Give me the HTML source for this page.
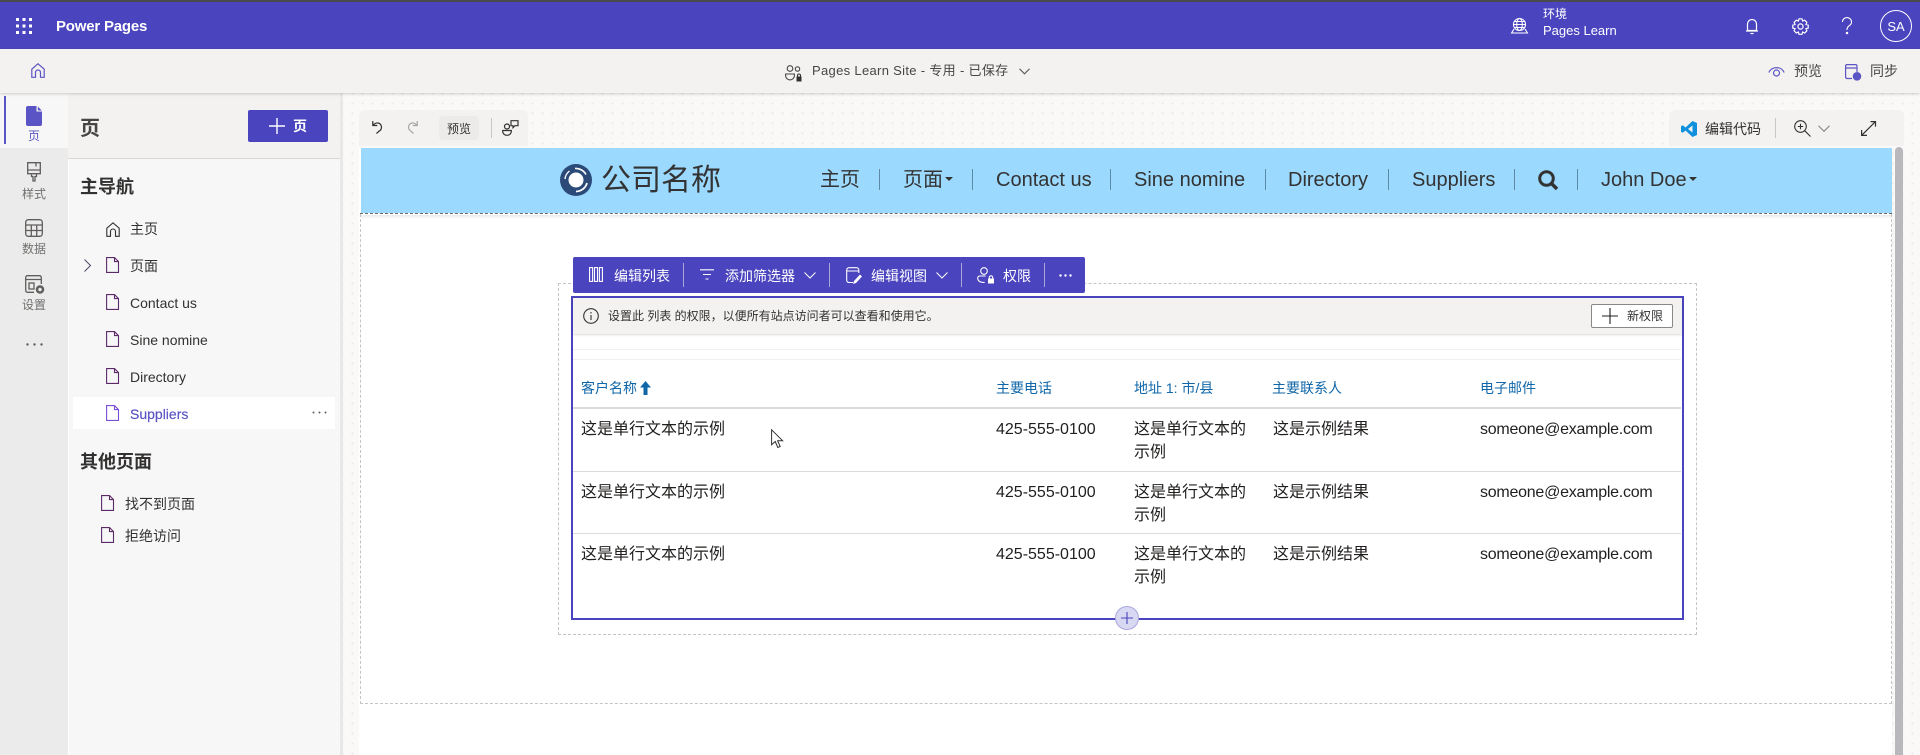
<!DOCTYPE html>
<html lang="zh-CN"><head><meta charset="utf-8"><title>Power Pages</title>
<style>
html,body{margin:0;padding:0;width:1920px;height:755px;overflow:hidden;background:#fff}
body{position:relative;font-family:"Liberation Sans","Noto Sans CJK SC",sans-serif;color:#323130;font-size:14px}
.a{position:absolute}
.t{position:absolute;white-space:nowrap;line-height:20px;height:20px}
svg{position:absolute;overflow:visible;fill:none}
.nav{font-size:20px;color:#333;line-height:28px;height:28px;top:165.500px}
.sep{position:absolute;width:1px;top:169px;height:21px;background:#5f8aa6}
.tb{position:absolute;width:1px;top:263px;height:24px;background:#a9a6d8}
.w{color:#fff;font-size:14px;top:265.500px}
.h{font-size:14px;color:#0f66a8;top:378px}
.c{font-size:16px;color:#201f1e;line-height:23px;height:23px}
.m{letter-spacing:-.25px}
.r{position:absolute;left:573px;width:1108px;height:1px}
.rl{color:#71706e;font-size:12px;left:14px;width:40px;text-align:center}
.it{font-size:14px;color:#323130}
</style></head><body>

<!-- top bar -->
<div class="a" style="left:0;top:0;width:1920px;height:2px;background:#4b4b4f"></div>
<div class="a" style="left:0;top:2px;width:1920px;height:47px;background:#4a44bf"></div>
<svg style="left:16px;top:18px" width="16" height="16"><g fill="#fff"><rect width="3" height="3"/><rect x="6.500" width="3" height="3"/><rect x="13" width="3" height="3"/><rect y="6.500" width="3" height="3"/><rect x="6.500" y="6.500" width="3" height="3"/><rect x="13" y="6.500" width="3" height="3"/><rect y="13" width="3" height="3"/><rect x="6.500" y="13" width="3" height="3"/><rect x="13" y="13" width="3" height="3"/></g></svg>
<div class="t" style="left:56px;top:17px;color:#fff;font-size:15px;font-weight:700;letter-spacing:-.2px">Power Pages</div>
<svg style="left:1511px;top:18px" width="17" height="16" stroke="#fff" stroke-width="1.100"><circle cx="8.500" cy="6.500" r="6"/><ellipse cx="8.500" cy="6.500" rx="2.800" ry="6"/><path d="M2.500 6.500h12M3.400 3.500h10.200M3.400 9.500h10.200M3 11l-2.400 4h15.800L14 11"/></svg>
<div class="t" style="left:1543px;top:4px;color:#fff;font-size:12px">环境</div>
<div class="t" style="left:1543px;top:21px;color:#fff;font-size:13px">Pages Learn</div>
<svg style="left:1745px;top:18px" width="14" height="17" stroke="#fff" stroke-width="1.200"><path d="M2.500 12.500V6a4.500 4.500 0 0 1 9 0v6.500zM1 13h12M5.500 15.500h3"/></svg>
<svg style="left:1792px;top:18px" width="17" height="17" stroke="#fff" stroke-width="1.200"><circle cx="8.500" cy="8.500" r="2.600"/><path d="M7 .8h3l.6 2.300 2.100-.9 2.200 2.200-1 2.100 2.300.6v3l-2.300.6 1 2.100-2.200 2.200-2.100-1-.6 2.300H7l-.6-2.300-2.100 1-2.200-2.200 1-2.100-2.300-.6v-3l2.300-.6-1-2.100 2.200-2.200 2.100.9z"/></svg>
<svg style="left:1841px;top:17px" width="12" height="18" stroke="#fff" stroke-width="1.100"><path d="M1.500 5a4.500 4.300 0 1 1 7 3.500C7 9.800 6 10.500 6 13"/><circle cx="6" cy="16" r=".7" fill="#fff"/></svg>
<div class="a" style="left:1880px;top:10px;width:30px;height:30px;border:1px solid #fff;border-radius:50%;color:#fff;font-size:13px;line-height:32px;text-align:center">SA</div>

<!-- sub bar -->
<div class="a" style="left:0;top:49px;width:1920px;height:44px;background:#f3f2f1;box-shadow:0 1px 3px rgba(0,0,0,.18);z-index:3"></div>
<div style="position:absolute;left:0;top:0;width:1920px;height:93px;z-index:4">
<svg style="left:31px;top:63px" width="14" height="15" stroke="#5b54c4" stroke-width="1.200"><path d="M.8 14.300V6.200L7 .8l6.200 5.400v8.100H9.500V9.500a2.500 2.500 0 0 0-5 0v4.800z"/></svg>
<svg style="left:785px;top:65px" width="18" height="17" stroke="#484644" stroke-width="1.100"><circle cx="5" cy="3.500" r="2.800"/><circle cx="12.500" cy="4" r="2.200"/><path d="M.6 9h8.800v1.500a4.400 4.400 0 0 1-8.800 0z"/><rect x="11.500" y="11.500" width="5" height="5" fill="#323130" stroke="none"/><path d="M12.500 11.500v-1a1.500 1.500 0 0 1 3 0v1" stroke="#323130"/></svg>
<div class="t" style="left:812px;top:61px;font-size:13px;color:#484644;letter-spacing:.32px">Pages Learn Site - 专用 - 已保存</div>
<svg style="left:1019px;top:68px" width="11" height="7" stroke="#605e5c" stroke-width="1.100"><path d="M.5.800l5 5 5-5"/></svg>
<svg style="left:1768px;top:66px" width="17" height="11" stroke="#5b54c4" stroke-width="1.200"><path d="M.8 6.500a8.500 8.500 0 0 1 15.400 0"/><circle cx="8.500" cy="7" r="3"/></svg>
<div class="t" style="left:1794px;top:61px;font-size:14px;color:#484644">预览</div>
<svg style="left:1845px;top:64px" width="16" height="16" stroke="#5b54c4" stroke-width="1.200"><path d="M7 14.500H2A1.500 1.500 0 0 1 .6 13V2A1.500 1.500 0 0 1 2 .6h8.500A1.500 1.500 0 0 1 12 2v6M.6 4h11.400"/><circle cx="12" cy="12.300" r="3.700" fill="#5b54c4"/></svg>
<div class="t" style="left:1870px;top:61px;font-size:14px;color:#484644">同步</div>
</div>

<!-- left rail -->
<div class="a" style="left:0;top:93px;width:68px;height:662px;background:#ebebeb"></div>
<div class="a" style="left:0;top:93px;width:68px;height:55px;background:#f7f7f7"></div>
<div class="a" style="left:4px;top:96px;width:2px;height:48px;background:#5b54c4"></div>
<svg style="left:26px;top:106px" width="16" height="20"><path fill="#5b54c4" d="M2 0h8.500v5.500H16V18a2 2 0 0 1-2 2H2a2 2 0 0 1-2-2V2a2 2 0 0 1 2-2z"/><path fill="#5b54c4" d="M11.800.5l4 4h-4z"/></svg>
<div class="t rl" style="top:126px;color:#5b54c4">页</div>
<svg style="left:27px;top:162px" width="14" height="20" stroke="#605e5c" stroke-width="1.300"><path d="M.7.700h12.600v11H.7zM.7 8h12.600M9 .7v3.800M4.500 11.700v2.800h1.500v4.500h2v-4.500h1.500v-2.800"/></svg>
<div class="t rl" style="top:184px">样式</div>
<svg style="left:25px;top:219px" width="18" height="18" stroke="#605e5c" stroke-width="1.300"><rect x=".7" y=".7" width="16.600" height="16.600" rx="2.500"/><path d="M.7 6h16.600M.7 11.500h16.600M6.300 6v11.300M11.700 6v11.300"/></svg>
<div class="t rl" style="top:239px">数据</div>
<svg style="left:25px;top:275px" width="20" height="20" stroke="#605e5c" stroke-width="1.300"><path d="M9 17.300H2.500a1.800 1.800 0 0 1-1.800-1.800V2.500A1.800 1.800 0 0 1 2.500.7h12a1.800 1.800 0 0 1 1.800 1.800V9M.7 4.500h15.600"/><rect x="4" y="8" width="5" height="6"/><circle cx="15" cy="14.500" r="3" stroke-width="2.500"/></svg>
<div class="t rl" style="top:295px">设置</div>
<svg style="left:26px;top:343px" width="17" height="3"><g fill="#605e5c"><circle cx="1.500" cy="1.500" r="1.200"/><circle cx="8.500" cy="1.500" r="1.200"/><circle cx="15.500" cy="1.500" r="1.200"/></g></svg>

<!-- panel -->
<div class="a" style="left:69px;top:93px;width:271px;height:662px;background:#f7f7f7"></div>
<div class="a" style="left:68px;top:93px;width:272px;height:65px;background:#f3f2f1;border-bottom:1px solid #d8d7d6"></div>
<div class="a" style="left:340px;top:93px;width:3px;height:662px;background:#e8e8e8"></div>
<div class="t" style="left:80px;top:119px;font-size:20px;font-weight:700;color:#484644">页</div>
<div class="a" style="left:248px;top:110px;width:80px;height:32px;background:#4a44bf;border-radius:2px"></div>
<svg style="left:269px;top:118px" width="16" height="16" stroke="#fff" stroke-width="1.400"><path d="M8 0v16M0 8h16"/></svg>
<div class="t" style="left:293px;top:116px;font-size:14px;font-weight:700;color:#fff">页</div>
<div class="t" style="left:80px;top:176.500px;font-size:18px;font-weight:700;color:#323130">主导航</div>

<svg style="left:106px;top:222px" width="14" height="15" stroke="#323130" stroke-width="1.100"><path d="M.8 14.300V6.200L7 .8l6.200 5.400v8.100H9.500V9.500a2.500 2.500 0 0 0-5 0v4.800z"/></svg>
<div class="t it" style="left:130px;top:219px">主页</div>
<svg style="left:84px;top:259px" width="7" height="13" stroke="#4a4a6a" stroke-width="1"><path d="M.5.500l6 6-6 6"/></svg>
<svg style="left:106px;top:257px" width="13" height="16" stroke="#5c2a68" stroke-width="1.100"><path d="M.6.600h7.900l4 4v10.800H.6zM8.500.600v4h4"/></svg>
<div class="t it" style="left:130px;top:256px">页面</div>
<svg style="left:106px;top:294px" width="13" height="16" stroke="#5c2a68" stroke-width="1.100"><path d="M.6.600h7.900l4 4v10.800H.6zM8.500.600v4h4"/></svg>
<div class="t it" style="left:130px;top:293px">Contact us</div>
<svg style="left:106px;top:331px" width="13" height="16" stroke="#5c2a68" stroke-width="1.100"><path d="M.6.600h7.900l4 4v10.800H.6zM8.500.600v4h4"/></svg>
<div class="t it" style="left:130px;top:330px">Sine nomine</div>
<svg style="left:106px;top:368px" width="13" height="16" stroke="#5c2a68" stroke-width="1.100"><path d="M.6.600h7.900l4 4v10.800H.6zM8.500.600v4h4"/></svg>
<div class="t it" style="left:130px;top:367px">Directory</div>
<div class="a" style="left:73px;top:397px;width:262px;height:32px;background:#fff"></div>
<svg style="left:106px;top:405px" width="13" height="16" stroke="#7a4fd6" stroke-width="1.100"><path d="M.6.600h7.900l4 4v10.800H.6zM8.500.600v4h4"/></svg>
<div class="t it" style="left:130px;top:404px;color:#5b54c4;-webkit-text-stroke:.2px #5b54c4">Suppliers</div>
<svg style="left:312px;top:411px" width="15" height="3"><g fill="#605e5c"><circle cx="1.500" cy="1.500" r="1"/><circle cx="7.500" cy="1.500" r="1"/><circle cx="13.500" cy="1.500" r="1"/></g></svg>
<div class="t" style="left:80px;top:452px;font-size:18px;font-weight:700;color:#323130">其他页面</div>
<svg style="left:101px;top:495px" width="13" height="16" stroke="#5c2a68" stroke-width="1.100"><path d="M.6.600h7.900l4 4v10.800H.6zM8.500.600v4h4"/></svg>
<div class="t it" style="left:125px;top:494px">找不到页面</div>
<svg style="left:101px;top:527px" width="13" height="16" stroke="#5c2a68" stroke-width="1.100"><path d="M.6.600h7.900l4 4v10.800H.6zM8.500.600v4h4"/></svg>
<div class="t it" style="left:125px;top:526px">拒绝访问</div>

<!-- canvas -->
<div class="a" style="left:343px;top:93px;width:1577px;height:662px;background-color:#faf9f8;background-image:radial-gradient(circle at 1.500px 1.500px,#eceae8 1px,transparent 1.300px);background-size:10px 10px;background-position:8px 9px"></div>
<div class="a" style="left:359px;top:148px;width:1533px;height:607px;background:#fff"></div>

<!-- editor toolbars -->
<div class="a" style="left:359px;top:110px;width:169px;height:36px;background:#f3f2f1;border-radius:6px 6px 0 0"></div>
<svg style="left:372px;top:120px" width="11" height="14" stroke="#323130" stroke-width="1.200"><path d="M.8 1v4.500h4.500M.8 5.500C2.500 3.500 4 2.700 6 3a4.300 4.300 0 0 1 1.200 8L4.500 13.500"/></svg>
<svg style="left:407px;top:120px" width="11" height="14" stroke="#a8a6a4" stroke-width="1.200"><path d="M10.200 1v4.500H5.700M10.200 5.500C8.500 3.500 7 2.700 5 3a4.300 4.300 0 0 0-1.200 8l2.700 2.500"/></svg>
<div class="a" style="left:439px;top:116px;width:40px;height:24px;background:#edebe9;border-radius:4px"></div>
<div class="t" style="left:447px;top:119px;font-size:12px;color:#323130">预览</div>
<div class="a" style="left:491px;top:118px;width:1px;height:20px;background:#c8c6c4"></div>
<svg style="left:502px;top:120px" width="17" height="16" stroke="#323130" stroke-width="1.200"><circle cx="5" cy="6.500" r="2.500"/><path d="M.7 10.500h8.600v1a4.300 3.800 0 0 1-8.600 0zM9 .7h7v5h-3l-2 2v-2H9z"/></svg>

<div class="a" style="left:1669px;top:110px;width:235px;height:36px;background:#f3f2f1;border-radius:6px 6px 0 0"></div>
<svg style="left:1681px;top:121px" width="16" height="16"><path fill="#0f8fdc" d="M11.500 0L16 2v12l-4.500 2L4.500 9.500 1.800 11.700 0 10.800V5.200l1.800-.9 2.700 2.200zM11.500 4.500L7 8l4.500 3.500z"/></svg>
<div class="t" style="left:1705px;top:119px;font-size:14px;color:#323130">编辑代码</div>
<div class="a" style="left:1775px;top:118px;width:1px;height:20px;background:#c8c6c4"></div>
<svg style="left:1794px;top:120px" width="17" height="17" stroke="#323130" stroke-width="1.100"><circle cx="6.500" cy="6.500" r="5.800"/><path d="M10.700 10.700l5.800 5.800M6.500 3.800v5.400M3.800 6.500h5.400"/></svg>
<svg style="left:1818px;top:125px" width="12" height="7" stroke="#8a8886" stroke-width="1.100"><path d="M.5.800l5.500 5.500L11.500.800"/></svg>
<svg style="left:1861px;top:121px" width="15" height="15" stroke="#323130" stroke-width="1.200"><path d="M9.500.6h5v5M14.500.6L.6 14.400M.6 9v5.400H6"/></svg>

<!-- site header -->
<div class="a" style="left:361px;top:148px;width:1531px;height:65px;background:#9bd9ff"></div>
<div class="a" style="left:360px;top:213px;width:1532px;height:0;border-top:1.500px dashed #6a6a6a"></div>
<div class="a" style="left:361px;top:215px;width:1531px;height:4px;background:linear-gradient(#e9e9e9,#fff)"></div>
<div class="a" style="left:360px;top:214px;width:1532px;height:490px;border:1px dashed #c4c4c4;border-top:0;box-sizing:border-box"></div>
<svg style="left:560px;top:164px" width="32" height="32"><circle cx="16" cy="16" r="16" fill="#2c4a78"/><circle cx="16" cy="16" r="7.500" fill="#fff"/><path d="M15 4.500a11.500 11.500 0 0 1 11 6" stroke="#fff" stroke-width="1.600"/><path d="M27 19a11.500 11.500 0 0 1-11 8.500" stroke="#fff" stroke-width="1.800"/><path d="M5 15a11.500 11.500 0 0 1 4.500-8" stroke="#fff" stroke-width="1.400"/></svg>
<div class="t" style="left:601px;top:161px;font-size:30px;line-height:40px;height:40px;color:#333">公司名称</div>
<div class="t nav" style="left:820px">主页</div><div class="sep" style="left:879px"></div>
<div class="t nav" style="left:903px">页面</div>
<svg style="left:945px;top:177px" width="8" height="4"><path fill="#333" d="M0 0h8L4 4z"/></svg>
<div class="sep" style="left:972px"></div>
<div class="t nav" style="left:996px">Contact us</div><div class="sep" style="left:1110px"></div>
<div class="t nav" style="left:1134px">Sine nomine</div><div class="sep" style="left:1265px"></div>
<div class="t nav" style="left:1288px">Directory</div><div class="sep" style="left:1388px"></div>
<div class="t nav" style="left:1412px">Suppliers</div><div class="sep" style="left:1514px"></div>
<svg style="left:1538px;top:170px" width="21" height="20" stroke="#333" stroke-width="3"><circle cx="8.500" cy="8.500" r="6.800"/><path d="M13.500 13.500l5.500 5.500" stroke-width="3.500"/></svg>
<div class="sep" style="left:1577px"></div>
<div class="t nav" style="left:1601px">John Doe</div>
<svg style="left:1689px;top:177px" width="8" height="4"><path fill="#333" d="M0 0h8L4 4z"/></svg>

<!-- scrollbar -->
<div class="a" style="left:1895px;top:147px;width:8px;height:608px;background:#b9b8bc;border-radius:4px 4px 0 0"></div>

<!-- section -->
<div class="a" style="left:558px;top:283px;width:1139px;height:352px;border:1px dashed #c4c4c4;box-sizing:border-box"></div>
<div class="a" style="left:571px;top:296px;width:1113px;height:324px;border:2px solid #4a44bf;box-sizing:border-box;background:#fff"></div>

<!-- list toolbar -->
<div class="a" style="left:573px;top:257px;width:512px;height:36px;background:#4a44bf;border-radius:2px"></div>
<svg style="left:589px;top:267px" width="14" height="15" stroke="#fff" stroke-width="1.100"><rect x=".6" y=".6" width="3" height="13.800"/><rect x="5.500" y=".6" width="3" height="13.800"/><rect x="10.400" y=".6" width="3" height="13.800"/></svg>
<div class="t w" style="left:614px">编辑列表</div><div class="tb" style="left:683px"></div>
<svg style="left:700px;top:269px" width="14" height="11" stroke="#fff" stroke-width="1.100"><path d="M0 .8h14M3 5.500h8M5.500 10h3"/></svg>
<div class="t w" style="left:725px">添加筛选器</div>
<svg style="left:804px;top:272px" width="12" height="7" stroke="#fff" stroke-width="1"><path d="M.5.500L6 6 11.500.500"/></svg>
<div class="tb" style="left:829px"></div>
<svg style="left:846px;top:267px" width="16" height="17" stroke="#fff" stroke-width="1.100"><path d="M7 15.500H3A2.300 2.300 0 0 1 .7 13V3A2.300 2.300 0 0 1 3 .7h7.500A2.300 2.300 0 0 1 12.800 3v3M.7 4h12"/><path fill="#fff" stroke="none" d="M14 7.500l2 2-6 6.500-3 1 1-3z"/></svg>
<div class="t w" style="left:871px">编辑视图</div>
<svg style="left:936px;top:272px" width="12" height="7" stroke="#fff" stroke-width="1"><path d="M.5.500L6 6 11.500.500"/></svg>
<div class="tb" style="left:961px"></div>
<svg style="left:977px;top:267px" width="17" height="17" stroke="#fff" stroke-width="1.100"><circle cx="7" cy="4" r="3.300"/><path d="M.7 11a2 2 0 0 1 2-2h6M.7 11c0 3 2.500 4.500 7 4.500"/><rect x="11" y="11.500" width="6" height="5" fill="#fff" stroke="none"/><path d="M12.300 11.500v-1a1.700 1.700 0 0 1 3.400 0v1"/></svg>
<div class="t w" style="left:1003px">权限</div><div class="tb" style="left:1044px"></div>
<svg style="left:1059px;top:274px" width="13" height="3"><g fill="#fff"><circle cx="1.500" cy="1.500" r="1.200"/><circle cx="6.500" cy="1.500" r="1.200"/><circle cx="11.500" cy="1.500" r="1.200"/></g></svg>

<!-- notice -->
<div class="a" style="left:573px;top:298px;width:1109px;height:36px;background:#f3f2f1;box-shadow:0 1px 2px rgba(0,0,0,.15)"></div>
<svg style="left:583px;top:308px" width="16" height="16" stroke="#323130" stroke-width="1.100"><circle cx="8" cy="8" r="7.300"/><path d="M8 7v5M8 4v1.500"/></svg>
<div class="t" style="left:608px;top:306px;font-size:12px;color:#323130">设置此 列表 的权限，以便所有站点访问者可以查看和使用它。</div>
<div class="a" style="left:1591px;top:304px;width:82px;height:24px;background:#fff;border:1px solid #8a8886;border-radius:2px;box-sizing:border-box"></div>
<svg style="left:1602px;top:308px" width="16" height="16" stroke="#201f1e" stroke-width="1.100"><path d="M8 0v16M0 8h16"/></svg>
<div class="t" style="left:1627px;top:306px;font-size:12px;color:#323130">新权限</div>

<!-- table -->
<div class="r" style="top:349px;background:#f0f0f0"></div>
<div class="r" style="top:359px;background:#efefef"></div>
<div class="t h" style="left:581px">客户名称</div>
<svg style="left:640px;top:381px" width="11" height="14"><path fill="#0f66a8" d="M5.500 0L11 6.500H7.500V14h-4V6.500H0z"/></svg>
<div class="t h" style="left:996px">主要电话</div>
<div class="t h" style="left:1134px">地址 1: 市/县</div>
<div class="t h" style="left:1272px">主要联系人</div>
<div class="t h" style="left:1480px">电子邮件</div>
<div class="r" style="top:407px;height:2px;background:#dcdcdc"></div>

<div class="t c" style="left:581px;top:418px">这是单行文本的示例</div>
<div class="t c" style="left:996px;top:418px">425-555-0100</div>
<div class="t c" style="left:1134px;top:418px">这是单行文本的</div>
<div class="t c" style="left:1134px;top:441px">示例</div>
<div class="t c" style="left:1273px;top:418px">这是示例结果</div>
<div class="t c m" style="left:1480px;top:418px">someone@example.com</div>
<div class="r" style="top:471px;background:#dcdcdc"></div>

<div class="t c" style="left:581px;top:481px">这是单行文本的示例</div>
<div class="t c" style="left:996px;top:481px">425-555-0100</div>
<div class="t c" style="left:1134px;top:481px">这是单行文本的</div>
<div class="t c" style="left:1134px;top:504px">示例</div>
<div class="t c" style="left:1273px;top:481px">这是示例结果</div>
<div class="t c m" style="left:1480px;top:481px">someone@example.com</div>
<div class="r" style="top:533px;background:#dcdcdc"></div>

<div class="t c" style="left:581px;top:543px">这是单行文本的示例</div>
<div class="t c" style="left:996px;top:543px">425-555-0100</div>
<div class="t c" style="left:1134px;top:543px">这是单行文本的</div>
<div class="t c" style="left:1134px;top:566px">示例</div>
<div class="t c" style="left:1273px;top:543px">这是示例结果</div>
<div class="t c m" style="left:1480px;top:543px">someone@example.com</div>

<!-- add circle -->
<div class="a" style="left:1115px;top:606px;width:24px;height:24px;border-radius:50%;background:#d9d8f3;border:1px solid #a9a6e0;box-sizing:border-box"></div>
<svg style="left:1121px;top:612px" width="12" height="12" stroke="#4a44bf" stroke-width="1.100"><path d="M6 0v12M0 6h12"/></svg>

<!-- cursor -->
<svg style="left:771px;top:429px" width="13" height="20"><path fill="#fff" stroke="#323130" stroke-width="1" d="M.6.800v15l3.600-3.300 2.600 6 2.400-1-2.600-5.800h5z"/></svg>
</body></html>
